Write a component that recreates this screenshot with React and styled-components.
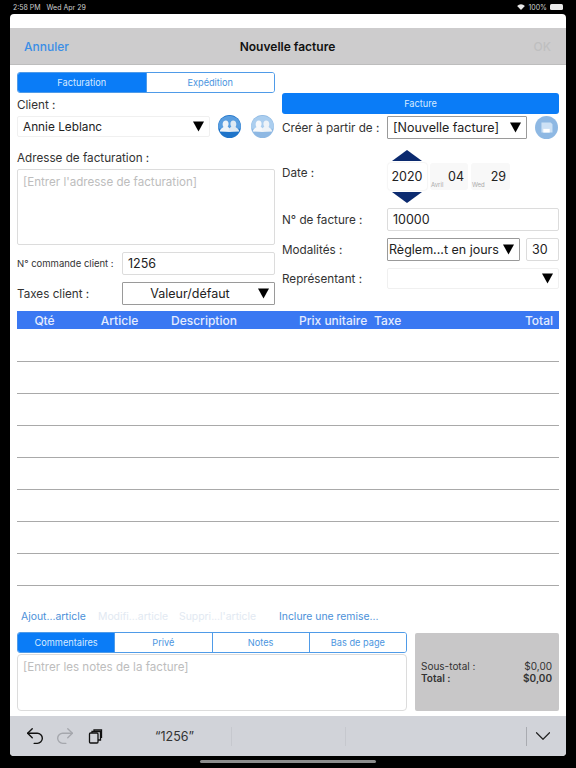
import React from "react";
import styled, { createGlobalStyle } from "styled-components";
import { Undo2, Redo2, ChevronDown } from "lucide-react";

const GlobalStyle = createGlobalStyle`
  html, body {
    margin: 0;
    padding: 0;
    background: #000;
    font-family: "Inter", "Liberation Sans", sans-serif;
  }
  * {
    box-sizing: border-box;
  }
`;

const Screen = styled.div`
  width: 576px;
  height: 768px;
  overflow: hidden;
  display: flex;
  flex-direction: column;
  background: #000;
`;

const StatusBar = styled.div`
  height: 14px;
  padding: 0 13px;
  display: flex;
  align-items: center;
  justify-content: space-between;
  color: #cfcfcf;
  font-size: 7px;
`;

const StatusGroup = styled.div`
  display: flex;
  align-items: center;
  gap: 3px;
`;

const Battery = styled.span`
  width: 13px;
  height: 6px;
  border-radius: 1.5px;
  background: #e8e8e8;
`;

const Sheet = styled.div`
  width: 556px;
  height: 742px;
  margin-left: 10px;
  border-radius: 4px;
  overflow: hidden;
  background: #fff;
  display: flex;
  flex-direction: column;
`;

const NavBar = styled.div`
  height: 37px;
  margin-top: 14px;
  padding: 0 15px 0 14px;
  flex: none;
  display: flex;
  align-items: center;
  justify-content: space-between;
  background: #cdcccd;
  border-bottom: 1px solid #bdbdbd;
`;

const NavButton = styled.span`
  width: 60px;
  font-size: 12px;
  font-weight: 500;
  color: ${({ $disabled }) => ($disabled ? "#bfbfc0" : "#3a8ee6")};
  text-align: ${({ $right }) => ($right ? "right" : "left")};
`;

const NavTitle = styled.span`
  font-size: 12px;
  font-weight: 600;
  color: #111;
`;

const Body = styled.div`
  flex: 1;
  padding: 7px 7px 5px;
  display: flex;
  flex-direction: column;
`;

const Columns = styled.div`
  height: 239px;
  display: grid;
  grid-template-columns: 258px 277px;
  column-gap: 7px;
`;

const Column = styled.div`
  display: flex;
  flex-direction: column;
`;

const Tabs = styled.div`
  height: 21px;
  flex: none;
  display: flex;
  border: 1px solid #4f9be8;
  border-radius: 3px;
  overflow: hidden;
`;

const Tab = styled.div`
  flex: 1;
  display: flex;
  align-items: center;
  justify-content: center;
  font-size: 9.2px;
  color: ${({ $active }) => ($active ? "#d6eaff" : "#4b95e0")};
  background: ${({ $active }) => ($active ? "#0a7cf7" : "#fff")};
  border-left: ${({ $first }) => ($first ? "none" : "1px solid #4f9be8")};
`;

const FactureButton = styled.div`
  height: 21px;
  margin-top: 21px;
  display: flex;
  align-items: center;
  justify-content: center;
  border-radius: 3px;
  background: #0a7cf7;
  color: #d6eaff;
  font-size: 9.2px;
`;

const Row = styled.div`
  display: flex;
  align-items: center;
  height: ${({ $h }) => $h}px;
  margin-top: ${({ $mt }) => $mt || 0}px;
  flex: none;
`;

const Label = styled.span`
  font-size: ${({ $small }) => ($small ? "9.5px" : "11.7px")};
  color: #333;
  white-space: nowrap;
  width: ${({ $w }) => ($w ? `${$w}px` : "auto")};
  flex: none;
`;

const Field = styled.div`
  height: ${({ $h }) => $h || 23}px;
  width: ${({ $w }) => ($w ? `${$w}px` : "auto")};
  margin-left: ${({ $ml }) => $ml || 0}px;
  flex: ${({ $w }) => ($w ? "none" : 1)};
  padding: 0 5px 0 ${({ $tight }) => ($tight ? 1 : 5)}px;
  display: flex;
  align-items: center;
  font-size: ${({ $textSize }) => $textSize || 12.5}px;
  color: #222;
  white-space: nowrap;
  border: 1px solid ${({ $dark, $faint }) => ($dark ? "#9a9a9a" : $faint ? "#f0f0f0" : "#dcdcdc")};
  border-radius: ${({ $dark }) => ($dark ? "1px" : "2px")};
`;

const FieldText = styled.span`
  flex: 1;
  text-align: ${({ $center }) => ($center ? "center" : "left")};
  padding-right: ${({ $center }) => ($center ? 6 : 0)}px;
`;

const Caret = styled.svg`
  width: 11px;
  height: 11px;
  flex: none;
`;

const TextArea = styled.div`
  height: ${({ $h }) => $h}px;
  margin-top: ${({ $mt }) => $mt || 0}px;
  padding: 5px 5px;
  font-size: 11.6px;
  color: #bdbdbd;
  border: 1px solid #dcdcdc;
  border-radius: ${({ $radius }) => $radius || 2}px;
  flex: none;
`;

const IconSlot = styled.svg`
  width: 23px;
  height: 23px;
  flex: none;
  margin-left: ${({ $ml }) => $ml}px;
  opacity: ${({ $dim }) => ($dim ? 0.5 : 1)};
`;

const DateRow = styled.div`
  height: 58px;
  margin-top: 10px;
  display: flex;
  flex: none;
`;

const DateLabel = styled(Label)`
  width: 105px;
  padding-top: 16px;
`;

const Spinner = styled.div`
  width: 40px;
  display: flex;
  flex-direction: column;
  align-items: center;
`;

const Arrow = styled.svg`
  width: 30px;
  height: 11px;
  flex: none;
`;

const DateBox = styled.div`
  position: relative;
  width: ${({ $w }) => $w}px;
  height: 27px;
  margin: ${({ $plain }) => ($plain ? "13px 0 0 3px" : "2px 0")};
  padding-right: 4px;
  display: flex;
  align-items: center;
  justify-content: flex-end;
  font-size: 12.5px;
  color: #222;
  border-radius: 3px;
  background: ${({ $plain }) => ($plain ? "#f8f8f8" : "#fff")};
  box-shadow: ${({ $plain }) => ($plain ? "none" : "0 0 2px #ddd")};
`;

const DateHint = styled.span`
  position: absolute;
  left: 1px;
  bottom: 2px;
  font-size: 6px;
  color: #aaa;
`;

const TableHeader = styled.div`
  height: 18px;
  margin-bottom: 1px;
  flex: none;
  display: grid;
  grid-template-columns: 55px 95px 128px 75px 1fr auto;
  align-items: center;
  padding-right: 6px;
  background: #3a78f2;
  color: #e4ecff;
  font-size: 12px;
  font-weight: 500;
`;

const HeaderCell = styled.span`
  text-align: ${({ $center }) => ($center ? "center" : "left")};
  padding-left: ${({ $pad }) => $pad || 0}px;
  white-space: nowrap;
`;

const TableRow = styled.div`
  height: 32px;
  flex: none;
  border-bottom: 1px solid #a9a9a9;
`;

const Actions = styled.div`
  height: 15px;
  margin-top: 23px;
  padding-left: 4px;
  flex: none;
  display: flex;
  align-items: center;
  font-size: 10.4px;
`;

const ActionLink = styled.span`
  width: ${({ $w }) => ($w ? `${$w}px` : "auto")};
  color: ${({ $disabled }) => ($disabled ? "#e2e9f2" : "#4b90d9")};
  white-space: nowrap;
`;

const Bottom = styled.div`
  margin-top: 8px;
  flex: 1;
  display: grid;
  grid-template-columns: 390px 144px;
  column-gap: 8px;
`;

const NotesPane = styled.div`
  display: flex;
  flex-direction: column;
  gap: 1px;
`;

const TotalsPanel = styled.div`
  height: 78px;
  margin-top: 1px;
  padding: 27px 7px 0 6px;
  background: #c8c7c8;
  border-radius: 2px;
  font-size: 10px;
  color: #333;
`;

const TotalLine = styled.div`
  height: 12px;
  display: flex;
  align-items: center;
  justify-content: space-between;
  font-weight: ${({ $bold }) => ($bold ? 600 : 400)};
`;

const Toolbar = styled.div`
  height: 40px;
  flex: none;
  padding-left: 14px;
  display: flex;
  align-items: center;
  background: #d1d3d9;
`;

const ToolIcons = styled.div`
  width: 131px;
  display: flex;
  align-items: center;
  gap: 8px;
  color: #111;
`;

const Suggestion = styled.div`
  width: 76px;
  font-size: 12.5px;
  color: #333;
`;

const Divider = styled.div`
  width: 1px;
  height: 19px;
  margin-left: ${({ $ml }) => $ml}px;
  background: ${({ $dark }) => ($dark ? "#a9abb1" : "#c6c8ce")};
`;

const ChevronSlot = styled.div`
  margin-left: 3px;
  display: flex;
  color: #222;
`;

const HomeBar = styled.div`
  width: 176px;
  height: 3px;
  margin: 3.5px auto 0;
  border-radius: 2px;
  background: #8c8c8c;
`;

function DownCaret() {
  return (
    <Caret viewBox="0 0 11 11">
      <path d="M0 .5h11L5.500 10.500z" fill="#000" />
    </Caret>
  );
}

function PeopleIcon({ dim, ml }) {
  return (
    <IconSlot viewBox="0 0 25 25" $dim={dim} $ml={ml}>
      <circle cx="12.500" cy="12.500" r="12.500" fill="#1f74c9" />
      <path d="M.2 11a12.500 12.500 0 0 1 24.600 0v4H.2z" fill="#5a9ee0" />
      <path d="M2 18c0-3 3-4 4-5-1.500-1.500-1.500-7 2.500-7 2 0 3 1.500 3 3.500 0 1.500-.5 2.500-1 3 1 1 2.500 2 3 3.500v2.500z" fill="#eef3f8" />
      <path d="M23 18c0-3-3-4-4-5 1.500-1.500 1.500-7-2.500-7-2 0-3 1.500-3 3.500 0 1.500.5 2.500 1 3-1 1-2.500 2-3 3.500v2.500z" fill="#dfe9f3" />
    </IconSlot>
  );
}

function TemplateIcon() {
  return (
    <IconSlot viewBox="0 0 25 25" $dim $ml={8}>
      <circle cx="12.500" cy="12.500" r="12.500" fill="#1f74c9" />
      <path d="M7 7h10l2 2v9H7z" fill="#9cc5ec" />
      <path d="M9 14h7v4H9z" fill="#fff" />
    </IconSlot>
  );
}

function CopyIcon() {
  return (
    <svg width="15" height="15" viewBox="0 0 15 15" fill="none" stroke="#111" strokeWidth="1.300" style={{ marginLeft: 4 }}>
      <rect x="1.500" y="4" width="8.500" height="10" rx="1" />
      <path d="M4 4V2.500h8.500V11H10" />
      <path d="M6 2.500V1h7.500v8" />
    </svg>
  );
}

function WifiIcon() {
  return (
    <svg width="8" height="6" viewBox="0 0 9 7" fill="#e8e8e8">
      <path d="M4.500 7 0 2.200a6.500 6.500 0 0 1 9 0z" />
    </svg>
  );
}

function App() {
  const rows = Array.from({ length: 8 }, (_, i) => i);

  return (
    <Screen>
      <GlobalStyle />
      <StatusBar>
        <span>2:58 PM&nbsp;&nbsp; Wed Apr 29</span>
        <StatusGroup>
          <WifiIcon />
          <span>100%</span>
          <Battery />
        </StatusGroup>
      </StatusBar>
      <Sheet>
        <NavBar>
          <NavButton>Annuler</NavButton>
          <NavTitle>Nouvelle facture</NavTitle>
          <NavButton $disabled $right>OK</NavButton>
        </NavBar>
        <Body>
          <Columns>
            <Column>
              <Tabs>
                <Tab $active $first>Facturation</Tab>
                <Tab>Expédition</Tab>
              </Tabs>
              <Row $h={23}>
                <Label>Client :</Label>
              </Row>
              <Row $h={21}>
                <Field $w={193} $h={21} $faint $textSize={11.8}>
                  <FieldText>Annie Leblanc</FieldText>
                  <DownCaret />
                </Field>
                <PeopleIcon ml={8} />
                <PeopleIcon dim ml={10} />
              </Row>
              <Row $h={18} $mt={12}>
                <Label>Adresse de facturation :</Label>
              </Row>
              <TextArea $h={76} $mt={2}>[Entrer l'adresse de facturation]</TextArea>
              <Row $h={23} $mt={7}>
                <Label $small $w={105}>N° commande client :</Label>
                <Field>1256</Field>
              </Row>
              <Row $h={23} $mt={7}>
                <Label $w={105}>Taxes client :</Label>
                <Field $dark>
                  <FieldText $center>Valeur/défaut</FieldText>
                  <DownCaret />
                </Field>
              </Row>
            </Column>
            <Column>
              <FactureButton>Facture</FactureButton>
              <Row $h={25} $mt={1}>
                <Label $w={105}>Créer à partir de :</Label>
                <Field $w={140} $dark>
                  <FieldText>[Nouvelle facture]</FieldText>
                  <DownCaret />
                </Field>
                <TemplateIcon />
              </Row>
              <DateRow>
                <DateLabel>Date :</DateLabel>
                <Spinner>
                  <Arrow viewBox="0 0 30 11">
                    <path d="M15 0 30 11H0z" fill="#0b2a6f" />
                  </Arrow>
                  <DateBox $w={39}>2020</DateBox>
                  <Arrow viewBox="0 0 30 11">
                    <path d="M0 0h30L15 11z" fill="#0b2a6f" />
                  </Arrow>
                </Spinner>
                <DateBox $plain $w={38}>
                  <DateHint>Avril</DateHint>04
                </DateBox>
                <DateBox $plain $w={39}>
                  <DateHint>Wed</DateHint>29
                </DateBox>
              </DateRow>
              <Row $h={23}>
                <Label $w={105}>N° de facture :</Label>
                <Field>10000</Field>
              </Row>
              <Row $h={23} $mt={7}>
                <Label $w={105}>Modalités :</Label>
                <Field $w={133} $dark $tight>
                  <FieldText>Règlem...t en jours</FieldText>
                  <DownCaret />
                </Field>
                <Field $ml={6}>30</Field>
              </Row>
              <Row $h={21} $mt={7}>
                <Label $w={105}>Représentant :</Label>
                <Field $faint $h={21}>
                  <FieldText />
                  <DownCaret />
                </Field>
              </Row>
            </Column>
          </Columns>
          <TableHeader>
            <HeaderCell $center>Qté</HeaderCell>
            <HeaderCell $center>Article</HeaderCell>
            <HeaderCell $pad={4}>Description</HeaderCell>
            <HeaderCell $pad={4}>Prix unitaire</HeaderCell>
            <HeaderCell $pad={4}>Taxe</HeaderCell>
            <HeaderCell>Total</HeaderCell>
          </TableHeader>
          {rows.map((r) => (
            <TableRow key={r} />
          ))}
          <Actions>
            <ActionLink $w={77}>Ajout...article</ActionLink>
            <ActionLink $w={81} $disabled>Modifi...article</ActionLink>
            <ActionLink $w={100} $disabled>Suppri...l'article</ActionLink>
            <ActionLink>Inclure une remise...</ActionLink>
          </Actions>
          <Bottom>
            <NotesPane>
              <Tabs>
                <Tab $active $first>Commentaires</Tab>
                <Tab>Privé</Tab>
                <Tab>Notes</Tab>
                <Tab>Bas de page</Tab>
              </Tabs>
              <TextArea $h={57} $radius={4}>[Entrer les notes de la facture]</TextArea>
            </NotesPane>
            <TotalsPanel>
              <TotalLine>
                <span>Sous-total :</span>
                <span>$0,00</span>
              </TotalLine>
              <TotalLine $bold>
                <span>Total :</span>
                <span>$0,00</span>
              </TotalLine>
            </TotalsPanel>
          </Bottom>
        </Body>
        <Toolbar>
          <ToolIcons>
            <Undo2 size={22} strokeWidth={1.5} />
            <Redo2 size={22} strokeWidth={1.5} color="#a5a7ad" />
            <CopyIcon />
          </ToolIcons>
          <Suggestion>“1256”</Suggestion>
          <Divider $ml={0} />
          <Divider $ml={113} />
          <Divider $dark $ml={180} />
          <ChevronSlot>
            <ChevronDown size={26} strokeWidth={1.1} />
          </ChevronSlot>
        </Toolbar>
      </Sheet>
      <HomeBar />
    </Screen>
  );
}

export default App;
